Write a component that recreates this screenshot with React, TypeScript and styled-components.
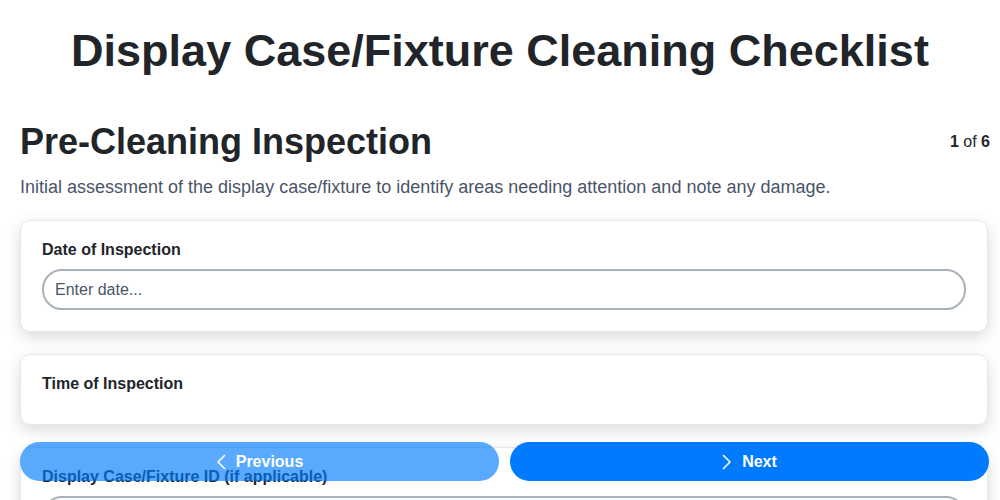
import styled, { createGlobalStyle } from "styled-components"

const GlobalStyle = createGlobalStyle`
    body {
        margin: 0;
        background: #fff;
        font-family: 'Liberation Sans', Arial, sans-serif;
        color: #212529;
    }
`

const fields = [
    { label: "Date of Inspection", placeholder: "Enter date..." },
    { label: "Time of Inspection" },
    { label: "Display Case/Fixture ID (if applicable)", placeholder: "Enter ID..." },
    { label: "Location", placeholder: "Enter location..." },
]

function ChevronLeft() {
    return (
        <svg width="10" height="16" viewBox="0 0 10 16" fill="none" stroke="currentColor" strokeWidth="1.6" strokeLinecap="round" strokeLinejoin="round">
            <path d="M8.5 1.5 2 8l6.5 6.5" />
        </svg>
    )
}

function ChevronRight() {
    return (
        <svg width="10" height="16" viewBox="0 0 10 16" fill="none" stroke="currentColor" strokeWidth="1.6" strokeLinecap="round" strokeLinejoin="round">
            <path d="M1.5 1.5 8 8l-6.5 6.5" />
        </svg>
    )
}

export default function App() {
    return (
        <>
            <GlobalStyle />
            <Page>
                <Title>Display Case/Fixture Cleaning Checklist</Title>

                <SectionHeader>
                    <SectionTitle>Pre-Cleaning Inspection</SectionTitle>
                    <Progress><b>1</b> of <b>6</b></Progress>
                </SectionHeader>
                <Description>
                    Initial assessment of the display case/fixture to identify areas needing attention and note any damage.
                </Description>

                <Fields>
                    {fields.map((f) => (
                        <Card key={f.label}>
                            <Label>{f.label}</Label>
                            {f.placeholder && <Input type="text" placeholder={f.placeholder} />}
                        </Card>
                    ))}
                </Fields>
            </Page>

            <Nav>
                <NavButton disabled>
                    <ChevronLeft /> Previous
                </NavButton>
                <NavButton>
                    <ChevronRight /> Next
                </NavButton>
            </Nav>
        </>
    )
}

const Page = styled.div`
    padding: 0 10px 100px 20px;
`

const Title = styled.h1`
    font-size: 45px;
    font-weight: 700;
    text-align: center;
    margin: 0 0 0 -10px;
    padding: 25px 0 44px;
    color: #212529;
`

const SectionHeader = styled.div`
    display: flex;
    justify-content: space-between;
    align-items: center;
`

const SectionTitle = styled.h2`
    font-size: 36px;
    font-weight: 700;
    margin: 0;
    color: #212529;
`

const Progress = styled.div`
    font-size: 16px;
    color: #212529;

    b {
        font-weight: 700;
    }
`

const Description = styled.p`
    font-size: 18px;
    color: #4a5568;
    margin: 14px 0 22px;
`

const Fields = styled.div`
    display: flex;
    flex-direction: column;
    gap: 22px;
`

const Card = styled.div`
    background: #fff;
    border: 1px solid #e6e8ec;
    border-radius: 10px;
    box-shadow: 0 5px 15px rgba(0, 0, 0, 0.15);
    padding: 20px 21px 21px;
    margin-right: 2px;
`

const Label = styled.label`
    display: block;
    font-size: 16px;
    font-weight: 700;
    color: #212529;
    margin-bottom: 10px;
`

const Input = styled.input`
    display: block;
    box-sizing: border-box;
    width: 100%;
    height: 41px;
    border: 2px solid #a9b1bb;
    border-radius: 20px;
    padding: 0 11px;
    font-family: 'Liberation Sans', Arial, sans-serif;
    font-size: 16px;
    outline: none;

    &::placeholder {
        color: #4a5568;
    }
`

const Nav = styled.div`
    position: fixed;
    left: 20px;
    right: 11px;
    bottom: 19px;
    display: flex;
    gap: 11px;
`

const NavButton = styled.button`
    flex: 1;
    height: 39px;
    border: none;
    border-radius: 20px;
    background: #007bff;
    color: #fff;
    font-family: 'Liberation Sans', Arial, sans-serif;
    font-size: 16px;
    font-weight: 700;
    display: flex;
    align-items: center;
    justify-content: center;
    gap: 10px;
    cursor: pointer;

    &:disabled {
        opacity: 0.65;
        cursor: default;
    }
`
